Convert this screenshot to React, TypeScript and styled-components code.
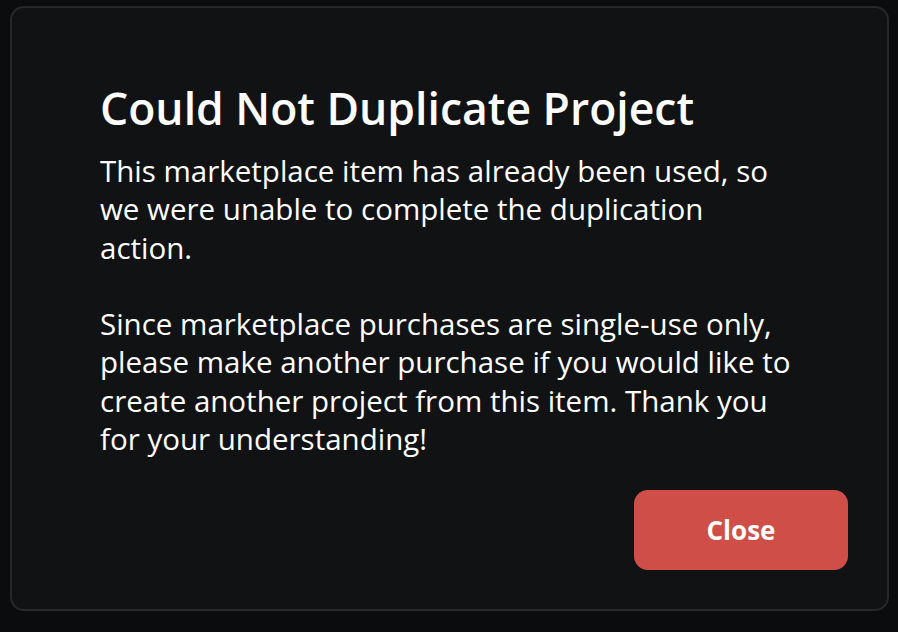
import React from "react";
import styled, { createGlobalStyle } from "styled-components";

const Global = createGlobalStyle`
  html, body { margin: 0; padding: 0; background: #0b0c0e; }
  body { font-family: "Open Sans", "Liberation Sans", sans-serif; }
`;

const Page = styled.div`
  width: 898px;
  height: 632px;
  box-sizing: border-box;
  padding: 6px 9px 21px 10px;
  display: flex;
`;

const Card = styled.div`
  flex: 1;
  box-sizing: border-box;
  background: #111214;
  border: 2px solid #26282c;
  border-radius: 14px;
  padding: 72px 39px 39px 88px;
  display: flex;
  flex-direction: column;
`;

const Title = styled.h1`
  margin: 0;
  color: #ffffff;
  font-size: 44.5px;
  font-weight: 600;
  line-height: 56px;
`;

const Body = styled.p`
  margin: 16px 0 0;
  color: #ffffff;
  font-size: 29.5px;
  font-weight: 500;
  line-height: 38.3px;
  max-width: 695px;
`;

const Footer = styled.div`
  margin-top: auto;
  display: flex;
  justify-content: flex-end;
`;

const Button = styled.button`
  width: 214px;
  height: 80px;
  border: none;
  border-radius: 14px;
  background: #cf4f48;
  color: #fff;
  font-family: inherit;
  font-size: 26px;
  font-weight: 700;
  cursor: pointer;
`;

export default function App() {
  return (
    <>
      <Global />
      <Page>
        <Card>
          <Title>Could Not Duplicate Project</Title>
          <Body>
            This marketplace item has already been used, so we were unable to complete the duplication action.
            <br />
            <br />
            Since marketplace purchases are single-use only, please make another purchase if you would like to create another project from this item. Thank you for your understanding!
          </Body>
          <Footer>
            <Button>Close</Button>
          </Footer>
        </Card>
      </Page>
    </>
  );
}
